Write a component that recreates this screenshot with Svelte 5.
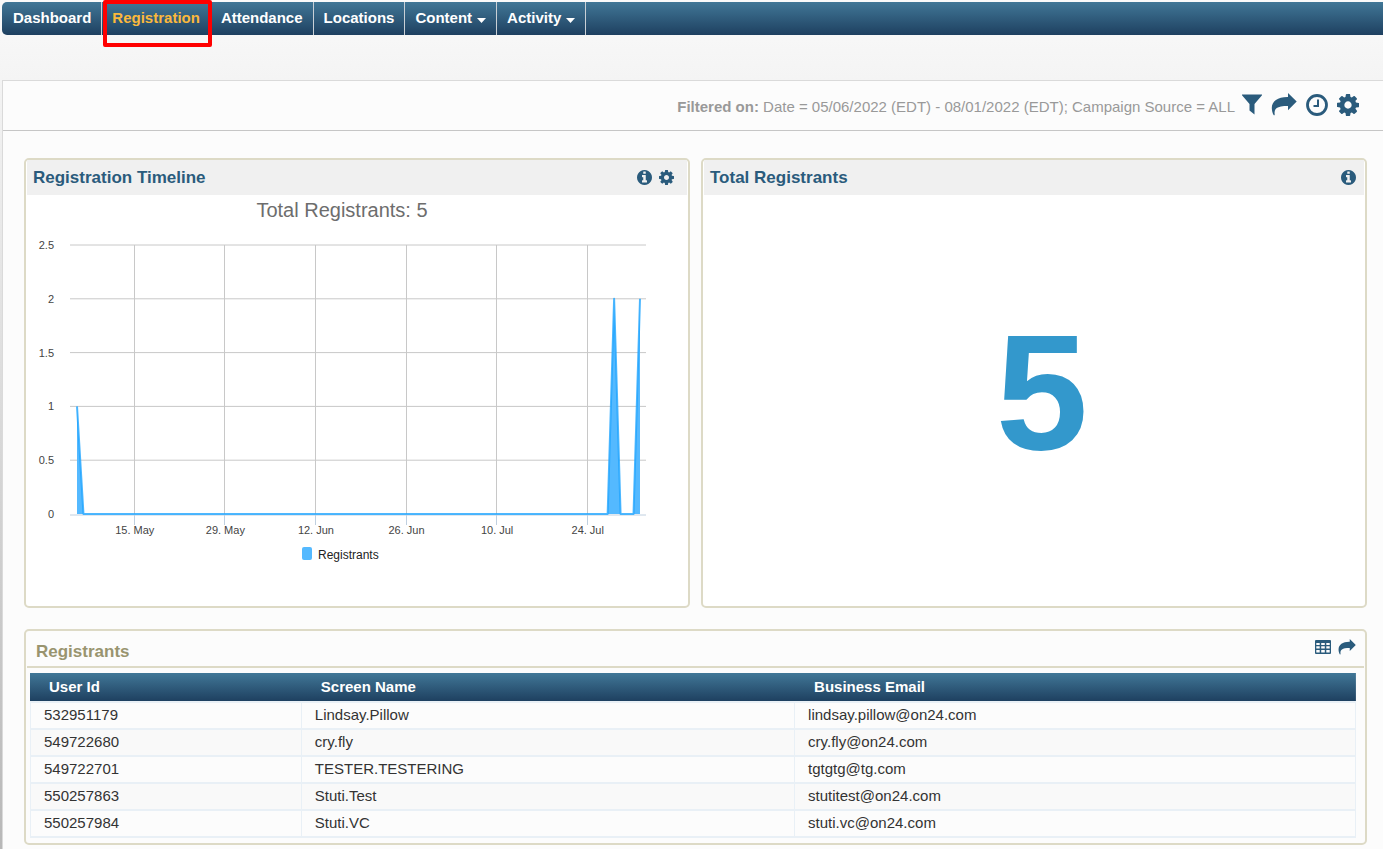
<script lang="ts">
  const tabs = [
    { label: 'Dashboard' },
    { label: 'Registration', active: true },
    { label: 'Attendance' },
    { label: 'Locations' },
    { label: 'Content', menu: true },
    { label: 'Activity', menu: true }
  ]

  const registrants = [
    { id: '532951179', name: 'Lindsay.Pillow', email: 'lindsay.pillow@on24.com' },
    { id: '549722680', name: 'cry.fly', email: 'cry.fly@on24.com' },
    { id: '549722701', name: 'TESTER.TESTERING', email: 'tgtgtg@tg.com' },
    { id: '550257863', name: 'Stuti.Test', email: 'stutitest@on24.com' },
    { id: '550257984', name: 'Stuti.VC', email: 'stuti.vc@on24.com' }
  ]

  // days are counted from 6 May, counts are sparse
  const lastDay = 87
  const counts = { 0: 1, 83: 2, 87: 2 }
  const dateTicks = [
    { day: 9, label: '15. May' },
    { day: 23, label: '29. May' },
    { day: 37, label: '12. Jun' },
    { day: 51, label: '26. Jun' },
    { day: 65, label: '10. Jul' },
    { day: 79, label: '24. Jul' }
  ]
  const valueTicks = [0, 0.5, 1, 1.5, 2, 2.5]

  const x = (day) => 50 + (day * 563) / lastDay
  const y = (value) => 319 - value * 107.6
  const gridX = (day) => Math.floor(x(day)) - 0.5

  const points = Array.from({ length: lastDay + 1 }, (_, day) => `${x(day)},${y(counts[day] || 0)}`)
  const line = 'M' + points.join('L')
  const area = `${line}L${x(lastDay)},${y(0)}L${x(0)},${y(0)}Z`
</script>

{#snippet infoIcon()}
  <svg class="icon small" viewBox="128 128 1536 1536" aria-hidden="true">
    <path d="M1152 1376v-160q0-14-9-23t-23-9h-96v-512q0-14-9-23t-23-9h-320q-14 0-23 9t-9 23v160q0 14 9 23t23 9h96v320h-96q-14 0-23 9t-9 23v160q0 14 9 23t23 9h448q14 0 23-9t9-23zm-128-896v-160q0-14-9-23t-23-9h-192q-14 0-23 9t-9 23v160q0 14 9 23t23 9h192q14 0 23-9t9-23zm640 416q0 209-103 385.5t-279.5 279.5-385.5 103-385.5-103-279.5-279.5-103-385.5 103-385.5 279.5-279.5 385.5-103 385.5 103 279.5 279.5 103 385.5z" />
  </svg>
{/snippet}

{#snippet gearIcon(size)}
  <svg class="icon {size}" viewBox="128 128 1536 1536" aria-hidden="true">
    <path d="M1152 896q0-106-75-181t-181-75-181 75-75 181 75 181 181 75 181-75 75-181zm512-109v222q0 12-8 23t-20 13l-185 28q-19 54-39 91 35 50 107 138 10 12 10 25t-9 23q-27 37-99 108t-94 71q-12 0-26-9l-138-108q-44 23-91 38-16 136-29 186-7 28-36 28h-222q-14 0-24.500-8.500t-11.500-21.500l-28-184q-49-16-90-37l-141 107q-10 9-25 9-14 0-25-11-126-114-165-168-7-10-7-23 0-12 8-23 15-21 51-66.500t54-70.500q-27-50-41-99l-183-27q-13-2-21-12.500t-8-23.500v-222q0-12 8-23t19-13l186-28q14-46 39-92-40-57-107-138-10-12-10-24 0-10 9-23 26-36 98.500-107.500t94.500-71.500q13 0 26 10l138 107q44-23 91-38 16-136 29-186 7-28 36-28h222q14 0 24.500 8.500t11.500 21.500l28 184q49 16 90 37l142-107q9-9 24-9 13 0 25 10 129 119 165 170 7 8 7 22 0 12-8 23-15 21-51 66.500t-54 70.500q26 50 41 98l183 28q13 2 21 12.500t8 23.500z" />
  </svg>
{/snippet}

{#snippet shareIcon(size)}
  <svg class="icon {size}" viewBox="0 0 26 23" aria-hidden="true">
    <path d="M17 0v4C7 3.800 0.800 8 0.800 15c0 2.500 0.700 5 1.800 7 0.300 0.500 1.200 0.300 1.100-0.300C2.900 15.500 5.500 12.900 17 12.900v4.300l8.700-8.600z" />
  </svg>
{/snippet}

<div class="page">
  <nav>
    <ul>
      {#each tabs as tab}
        <li class:active={tab.active}>
          {#if tab.menu}
            <button type="button" aria-haspopup="true">
              {tab.label}
              <svg class="caret" viewBox="0 0 9 5" aria-hidden="true"><path d="M0 0h9L4.500 5z" /></svg>
            </button>
          {:else}
            <a href="#{tab.label.toLowerCase()}">{tab.label}</a>
          {/if}
        </li>
      {/each}
    </ul>
  </nav>

  <main>
    <div class="toolbar">
      <p><strong>Filtered on:</strong> Date = 05/06/2022 (EDT) - 08/01/2022 (EDT); Campaign Source = ALL</p>
      <button type="button" aria-label="Filter">
        <svg class="icon filter" viewBox="0 0 20 21" aria-hidden="true">
          <path d="M0 0.500h20v0.800L12.500 10v10.500L7.500 16.500V10L0 1.300z" />
        </svg>
      </button>
      <button type="button" aria-label="Share">{@render shareIcon('wide')}</button>
      <button type="button" aria-label="Schedule">
        <svg class="icon large" viewBox="0 0 22 22" aria-hidden="true">
          <circle cx="11" cy="11" r="9.500" fill="none" stroke="currentColor" stroke-width="2.800" />
          <path d="M11 5.500h2v7.500H7.500v-2H11z" />
        </svg>
      </button>
      <button type="button" aria-label="Settings">{@render gearIcon('large')}</button>
    </div>

    <div class="content">
      <section class="panel">
        <header>
          <h2>Registration Timeline</h2>
          <button type="button" aria-label="About Registration Timeline">{@render infoIcon()}</button>
          <button type="button" class="last" aria-label="Timeline settings">{@render gearIcon('small')}</button>
        </header>
        <svg class="chart" viewBox="0 0 660 410" role="img" aria-label="Total Registrants: 5">
          <text class="chart-title" x="315" y="22">Total Registrants: 5</text>
          {#each valueTicks as value}
            {#if value > 0}
              <path class="grid-y" d="M43 {y(value)}H619" />
            {/if}
            <text class="value" x="27" y={y(value) + 4}>{value.toString()}</text>
          {/each}
          {#each dateTicks as tick}
            <path class="grid-x" d="M{gridX(tick.day)} {y(2.5)}V{y(0)}" />
            <path class="tick" d="M{gridX(tick.day)} 320v10" />
            <text class="date" x={x(tick.day) - 0.5} y="339">{tick.label}</text>
          {/each}
          <path class="axis" d="M43 320H619" />
          <path class="area" d={area} />
          <path class="line" d={line} />
          <rect class="swatch" x="275" y="352" width="10" height="13" rx="2" />
          <text class="legend" x="291" y="364">Registrants</text>
        </svg>
      </section>

      <section class="panel">
        <header>
          <h2>Total Registrants</h2>
          <button type="button" aria-label="About Total Registrants">{@render infoIcon()}</button>
        </header>
        <div class="total">5</div>
      </section>

      <section class="panel list">
        <header>
          <h2>Registrants</h2>
          <button type="button" aria-label="Choose columns">
            <svg class="icon table-icon" viewBox="0 0 16 14" aria-hidden="true">
              <path fill-rule="evenodd" d="M1 0h14q1 0 1 1v12q0 1-1 1H1q-1 0-1-1V1q0-1 1-1zM1.300 3v1.900h3.400V3zM6.200 3v1.900h3.600V3zM11.300 3v1.900h3.400V3zM1.300 6.300v2.300h3.400V6.300zM6.200 6.300v2.300h3.600V6.300zM11.300 6.300v2.300h3.400V6.300zM1.300 10v2.600h3.400V10zM6.200 10v2.600h3.600V10zM11.300 10v2.600h3.400V10z" />
            </svg>
          </button>
          <button type="button" aria-label="Export">{@render shareIcon('export')}</button>
        </header>
        <table>
          <colgroup>
            <col class="col-id" />
            <col class="col-name" />
            <col />
          </colgroup>
          <thead>
            <tr>
              <th scope="col">User Id</th>
              <th scope="col">Screen Name</th>
              <th scope="col">Business Email</th>
            </tr>
          </thead>
          <tbody>
            {#each registrants as person}
              <tr>
                <td>{person.id}</td>
                <td>{person.name}</td>
                <td>{person.email}</td>
              </tr>
            {/each}
          </tbody>
        </table>
      </section>
    </div>
  </main>
</div>

<style>
  :global(body) {
    margin: 0;
    font-family: Arial, "Liberation Sans", sans-serif;
    font-size: 15px;
  }

  .page {
    box-sizing: border-box;
    min-height: 100vh;
    padding: 2px 0 0 2px;
    display: flex;
    flex-direction: column;
    background: linear-gradient(#fafafa, #b8b8b8);
  }

  button {
    padding: 0;
    border: 0;
    background: none;
    color: #2a5b7c;
    font: inherit;
    cursor: pointer;
    display: flex;
    align-items: center;
  }

  /* top navigation */
  nav {
    background: linear-gradient(#417797, #1e4060);
    border-radius: 5px 0 0 5px;
    margin-bottom: 45px;
  }

  nav ul {
    display: flex;
    margin: 0;
    padding: 0;
    list-style: none;
  }

  nav li {
    position: relative;
    border-right: 1px solid #c9d0d6;
  }

  nav a,
  nav button {
    display: flex;
    align-items: center;
    gap: 5px;
    height: 33px;
    padding: 0 10px 2px;
    box-sizing: border-box;
    color: #fff;
    font-weight: bold;
    text-decoration: none;
  }

  nav li:first-child a {
    padding-left: 11px;
  }

  nav .active a {
    color: #fbb93c;
  }

  nav .active::after {
    content: "";
    position: absolute;
    inset: -2px -2px -12px 1px;
    border: 4px solid #f00;
    border-radius: 2px;
    pointer-events: none;
    z-index: 1;
  }

  .caret {
    width: 9px;
    height: 5px;
    margin-top: 5px;
    fill: #fff;
  }

  main {
    flex: 1;
    background: #fcfcfc;
    border-top: 1px solid #dadada;
    border-left: 1px solid #dadada;
  }

  .toolbar {
    display: flex;
    justify-content: flex-end;
    align-items: center;
    gap: 9px;
    height: 49px;
    padding-right: 24px;
    border-bottom: 1px solid #c6c6c6;
    color: #999;
  }

  .toolbar p {
    margin: 2px -2px 0 0;
  }

  .toolbar button {
    padding-bottom: 2px;
  }

  .icon {
    display: block;
    fill: currentColor;
  }

  .small {
    width: 15px;
    height: 15px;
  }

  .large {
    width: 22px;
    height: 22px;
  }

  .wide {
    width: 26px;
    height: 23px;
  }

  .filter {
    width: 20px;
    height: 21px;
  }

  .export {
    width: 18px;
    height: 16px;
  }

  .table-icon {
    width: 16px;
    height: 14px;
  }

  .content {
    display: grid;
    grid-template-columns: 1fr 1fr;
    gap: 21px 11px;
    padding: 27px 16px 4px 21px;
  }

  .panel {
    display: flex;
    flex-direction: column;
    padding: 0 1px 1px;
    border: 2px solid #dddac6;
    border-radius: 5px;
    background: #fff;
  }

  .panel header {
    display: flex;
    align-items: center;
    gap: 7px;
    height: 35px;
    padding: 0 8px 0 6px;
    background: #f0f0f0;
  }

  .panel .last {
    margin-right: 5px;
  }

  h2 {
    flex: 1;
    margin: 0;
    color: #2a5b7c;
    font-size: 17px;
    line-height: 20px;
  }

  .total {
    flex: 1;
    display: flex;
    align-items: center;
    justify-content: center;
    padding: 0 0 16px 16px;
    color: #3398cc;
    font-size: 166px;
    font-weight: bold;
    line-height: 1;
  }

  /* timeline chart */
  .chart {
    display: block;
    width: 100%;
    height: auto;
    font-size: 11px;
    fill: #444;
  }

  .chart-title {
    font-size: 20px;
    fill: #6d6d6d;
    text-anchor: middle;
  }

  .value {
    text-anchor: end;
  }

  .date {
    text-anchor: middle;
  }

  .legend {
    font-size: 12px;
    fill: #222;
  }

  .grid-x,
  .grid-y {
    stroke: #c8c8c8;
    stroke-width: 1px;
  }

  .tick,
  .axis {
    stroke: #c0d0e0;
    stroke-width: 1px;
  }

  .area,
  .swatch {
    fill: #54b9ff;
  }

  .line {
    fill: none;
    stroke: #20a5ff;
    stroke-opacity: 0.8;
    stroke-width: 2px;
    stroke-linejoin: round;
  }

  /* registrants list */
  .list {
    grid-column: 1 / -1;
    background: #fcfcfc;
    padding-bottom: 5px;
  }

  .list header {
    padding: 0 8px 0 9px;
    background: none;
    border-bottom: 2px solid #dddac6;
  }

  .list header button {
    padding-bottom: 4px;
  }

  .list h2 {
    padding-top: 6px;
    color: #99946f;
  }

  table {
    margin: 5px 8px 0 3px;
    border-spacing: 0;
    table-layout: fixed;
    color: #333;
  }

  .col-id {
    width: 20.5%;
  }

  .col-name {
    width: 37.2%;
  }

  thead {
    background: linear-gradient(#417797, #1e4060);
  }

  th {
    height: 28px;
    padding: 0 19px;
    color: #fff;
    text-align: left;
    line-height: 18px;
  }

  td {
    height: 23px;
    padding: 0 13px 2px;
    border-right: 1px solid #e9f0f6;
    border-bottom: 2px solid #e9f0f6;
    line-height: 18px;
  }

  td:first-child {
    border-left: 1px solid #e9f0f6;
  }

  tbody tr:first-child td {
    border-top: 2px solid #e9f0f6;
  }

  tbody tr:nth-child(even) {
    background: #f9f9f9;
  }
</style>
